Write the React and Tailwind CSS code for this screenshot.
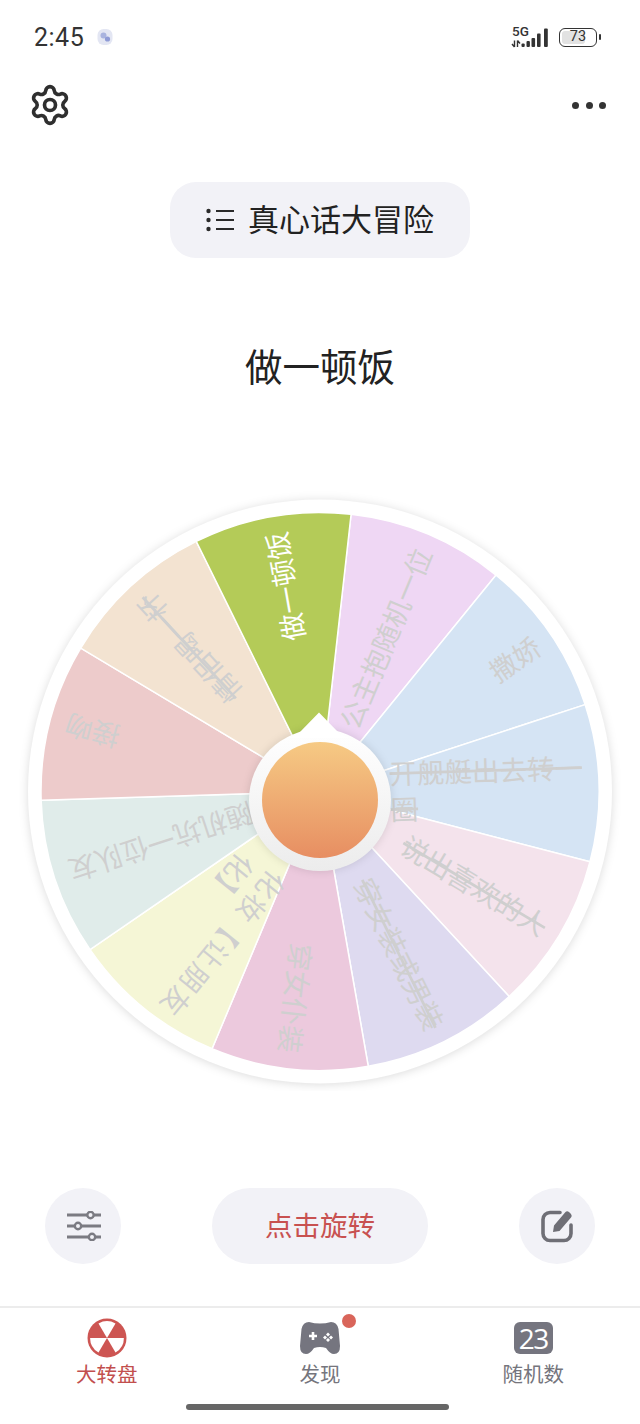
import { Settings } from 'lucide-react';

const CJK = 'font-["Noto_Sans_CJK_SC",sans-serif]';
const CX = 320;
const CY = 300.5; // wheel centre inside the svg
const R = 279;
const STEP = 360 / 11;

const slices = [
  { color: '#efd7f4', lines: [{ text: '公主抱随机一位' }] },
  { color: '#d5e4f4', lines: [{ text: '撒娇' }] },
  { color: '#d5e4f4', strike: true, lines: [{ text: '开舰艇出去转一', x: 70, y: -17 }, { text: '圈', x: 70, y: 19 }] },
  { color: '#f4e3ec', strike: true, lines: [{ text: '说出喜欢的人' }] },
  { color: '#dedaf0', strike: true, lines: [{ text: '穿女装或男装' }] },
  { color: '#ecc9dd', lines: [{ text: '穿女仆装' }] },
  { color: '#f5f6d6', lines: [{ text: '化妆【让朋友', x: 90, y: -22, wide: true }, { text: '化】', x: 97, y: 13 }] },
  { color: '#e0ecea', lines: [{ text: '随机坑一位队友' }] },
  { color: '#edcbcb', lines: [{ text: '接吻' }] },
  { color: '#f3e3d1', strike: true, lines: [{ text: '情侣喝一杯' }] },
  { color: '#b4cb58', white: true, lines: [{ text: '做一顿饭' }] },
];

function polar(deg, r) {
  const a = (deg * Math.PI) / 180;
  return [CX + r * Math.sin(a), CY - r * Math.cos(a)];
}

function Wheel() {
  return (
    <svg width="640" height="600" viewBox="0 0 640 600" className="block">
      <defs>
        <linearGradient id="orange" x1="0" y1="0" x2="0" y2="1">
          <stop offset="0" stopColor="#f6ca84" />
          <stop offset="1" stopColor="#e78e62" />
        </linearGradient>
        <linearGradient id="hub" x1="0" y1="0" x2="0" y2="1">
          <stop offset="0" stopColor="#ffffff" />
          <stop offset="1" stopColor="#ececec" />
        </linearGradient>
      </defs>
      <circle cx={CX} cy={CY} r="292" fill="#fff" className="drop-shadow-[0_1px_5px_rgba(0,0,0,0.14)]" />
      {slices.map((s, i) => {
        const start = 6.4 + i * STEP;
        const [x1, y1] = polar(start, R);
        const [x2, y2] = polar(start + STEP, R);
        return (
          <path
            key={i}
            d={`M${CX} ${CY}L${x1} ${y1}A${R} ${R} 0 0 1 ${x2} ${y2}Z`}
            fill={s.color}
            stroke="#fff"
            strokeWidth="1.5"
          />
        );
      })}
      {slices.map((s, i) => {
        const mid = 6.4 + i * STEP + STEP / 2;
        return (
          <g key={i} transform={`rotate(${mid - 90} ${CX} ${CY})`}>
            {s.lines.map((line, j) => (
              <text
                key={j}
                x={CX + (line.x ?? 263)}
                y={CY + (line.y ?? 0)}
                textAnchor={line.x ? 'start' : 'end'}
                dominantBaseline="central"
                fill={s.white ? '#ffffff' : '#cfcfcf'}
                className={`${CJK} text-[27.5px] ${line.wide ? 'tracking-[2.5px]' : ''} ${s.strike ? 'line-through' : ''}`}
              >
                {line.text}
              </text>
            ))}
          </g>
        );
      })}
      <circle cx={CX} cy="309" r="71" fill="url(#hub)" className="drop-shadow-[0_0_4px_rgba(0,0,0,0.12)]" />
      <path d="M319 221.5 L338 241 Q345 247 352 247 L286 247 Q293 247 300 241 Z" fill="#fff" />
      <circle cx={CX} cy="309" r="58" fill="url(#orange)" />
    </svg>
  );
}

function StatusBar() {
  return (
    <div className="h-[74px] flex items-center justify-between pl-[34px] pr-[39px]">
      <div className="flex items-center gap-[13px]">
        <span className="font-['Roboto',sans-serif] text-[25px] leading-none text-[#333] tracking-[0.5px]">2:45</span>
        <svg width="16" height="18" viewBox="0 0 16 18">
          <rect x="0.5" y="1" width="15" height="16" rx="6" fill="#e3e6f3" />
          <circle cx="6.5" cy="7.5" r="3" fill="#a9b3df" />
          <circle cx="10.5" cy="11" r="2.6" fill="#8f9bd6" />
        </svg>
      </div>
      <div className="flex items-center gap-[9px]">
        <div className="relative w-[39px] h-[22px]">
          <span className="absolute left-[1px] top-[-1px] font-['Roboto',sans-serif] font-medium text-[13.5px] leading-[13px] text-[#333]">5G</span>
          <svg width="39" height="22" viewBox="0 0 39 22" className="absolute left-0 top-0">
            <path d="M3.5 14.5v6.5M1 18l2.5 3M6.5 14.5v6.5M6.5 14.5l2.5 3" stroke="#333" strokeWidth="1.4" fill="none" />
            <rect x="10.5" y="17.5" width="3.2" height="3.5" rx="1" fill="#333" />
            <rect x="15.5" y="15" width="3.4" height="6" rx="1" fill="#333" />
            <rect x="20.5" y="12" width="3.6" height="9" rx="1" fill="#333" />
            <rect x="26" y="7.5" width="3.6" height="13.5" rx="1" fill="#333" />
            <rect x="33" y="2.5" width="3.8" height="18.5" rx="1" fill="#333" />
          </svg>
        </div>
        <div className="flex items-center gap-[2px]">
          <div className="relative w-[38px] h-[19px] rounded-[6px] border-[1.5px] border-[#333] p-[2px]">
            <div className="h-full w-[72%] rounded-[3px] bg-[#e2e2e2]" />
            <span className="absolute inset-0 flex items-center justify-center font-['Roboto',sans-serif] text-[14.5px] leading-none text-[#333]">73</span>
          </div>
          <div className="w-[2px] h-[6px] rounded-full bg-[#333]" />
        </div>
      </div>
    </div>
  );
}

function NavItem({ icon, label, active }) {
  return (
    <div className="w-[214px] flex flex-col items-center">
      <div className="h-[40px] flex items-center justify-center">{icon}</div>
      <span className={`${CJK} mt-[2px] text-[20.5px] leading-[27px] ${active ? 'text-[#c24f4e]' : 'text-[#75757d]'}`}>{label}</span>
    </div>
  );
}

export default function App() {
  return (
    <div className={`${CJK} w-[640px] h-[1424px] bg-white overflow-hidden`}>
      <StatusBar />

      <div className="h-[62px] flex items-center justify-between pl-[28px] pr-[34px]">
        <Settings size={44} strokeWidth={2} color="#2f2f2f" />
        <div className="flex gap-[6.5px]">
          <div className="w-[7px] h-[7px] rounded-full bg-[#333]" />
          <div className="w-[7px] h-[7px] rounded-full bg-[#333]" />
          <div className="w-[7px] h-[7px] rounded-full bg-[#333]" />
        </div>
      </div>

      <div className="mt-[46px] mx-auto w-[300px] h-[76px] rounded-[26px] bg-[#f2f2f7] flex items-center pl-[36px] gap-[14px]">
        <svg width="28" height="26" viewBox="0 0 28 26">
          <circle cx="2.5" cy="4" r="2.2" fill="#2a2a2a" />
          <circle cx="2.5" cy="13" r="2.2" fill="#2a2a2a" />
          <circle cx="2.5" cy="22" r="2.2" fill="#2a2a2a" />
          <path d="M10 4h18M10 13h18M10 22h18" stroke="#2a2a2a" strokeWidth="2" />
        </svg>
        <span className="pb-[5px] text-[31px] leading-none text-[#222]">真心话大冒险</span>
      </div>

      <div className="mt-[83px] h-[50px] pb-[3px] flex items-center justify-center text-[37.5px] leading-none text-[#222]">做一顿饭</div>

      <div className="mt-[100px]">
        <Wheel />
      </div>

      <div className="mt-[97px] flex items-center justify-between pl-[45px] pr-[45px]">
        <button className="w-[76px] h-[76px] rounded-full bg-[#f2f2f7] flex items-center justify-center pl-[2px]">
          <svg width="34" height="30" viewBox="0 0 34 30">
            <path d="M0.5 4h33M0.5 15h33M0.5 26h33" stroke="#7b7b82" strokeWidth="3.2" strokeLinecap="round" />
            <circle cx="23.5" cy="4" r="3.2" fill="#f2f2f7" stroke="#7b7b82" strokeWidth="2.4" />
            <circle cx="11" cy="15" r="3.2" fill="#f2f2f7" stroke="#7b7b82" strokeWidth="2.4" />
            <circle cx="25" cy="26" r="3.2" fill="#f2f2f7" stroke="#7b7b82" strokeWidth="2.4" />
          </svg>
        </button>
        <button className="w-[216px] h-[76px] pb-[2px] rounded-full bg-[#f2f2f7] flex items-center justify-center text-[27.5px] leading-none text-[#c85150]">
          点击旋转
        </button>
        <button className="w-[76px] h-[76px] rounded-full bg-[#f2f2f7] flex items-center justify-center">
          <svg width="34" height="34" viewBox="0 0 34 34">
            <path d="M20 3.5H10a7 7 0 0 0-7 7v14a7 7 0 0 0 7 7h14a7 7 0 0 0 7-7V16" fill="none" stroke="#6f6f76" strokeWidth="3.6" strokeLinecap="round" />
            <path d="M13 23 L14 16.5 L25.5 3 Q27 1.5 29 3 L31 5 Q32.5 7 31 8.5 L19.5 22 Z" fill="#6f6f76" />
          </svg>
        </button>
      </div>

      <div className="mt-[42px] border-t-2 border-[#ececec] pt-[10px] flex relative">
        <NavItem
          active
          label="大转盘"
          icon={
            <svg width="40" height="40" viewBox="0 0 40 40">
              <circle cx="20" cy="20" r="19.5" fill="#cd5552" />
              <path d="M20 20 L11.5 5.5 A17 17 0 0 1 28.5 5.5 Z" fill="#fff" />
              <path d="M20 20 L36.9 20 A17 17 0 0 1 28.5 34.6 Z" fill="#fff" />
              <path d="M20 20 L3.1 20 A17 17 0 0 0 11.5 34.6 Z" fill="#fff" />
            </svg>
          }
        />
        <NavItem
          label="发现"
          icon={
            <div className="relative">
              <svg width="40" height="34" viewBox="0 0 40 34">
                <path d="M9 1 Q20 4 31 1 Q37 1 38.5 8 L40 25 Q40 33 34 33 Q30 33 26 27 Q20 25 14 27 Q10 33 6 33 Q0 33 0 25 L1.5 8 Q3 1 9 1 Z" fill="#75757f" />
                <path d="M9 15h8M13 11v8" stroke="#fff" strokeWidth="2.6" />
                <path d="M28 11.5l2 2-2 2-2-2ZM28 17l2 2-2 2-2-2ZM25 14.5l2 2-2 2-2-2ZM31 14.5l2 2-2 2-2-2Z" fill="#fff" />
              </svg>
              <div className="absolute left-[42px] top-[-7px] w-[14px] h-[14px] rounded-full bg-[#d9655a]" />
            </div>
          }
        />
        <NavItem
          label="随机数"
          icon={
            <div className="w-[39px] h-[32px] rounded-[6px] bg-[#75757f] flex items-center justify-center font-['Open_Sans',sans-serif] font-medium text-[28px] tracking-[-1.5px] leading-none text-white">
              23
            </div>
          }
        />
      </div>

      <div className="mt-[17px] ml-[186px] w-[263px] h-[6px] rounded-full bg-[#666]" />
    </div>
  );
}
